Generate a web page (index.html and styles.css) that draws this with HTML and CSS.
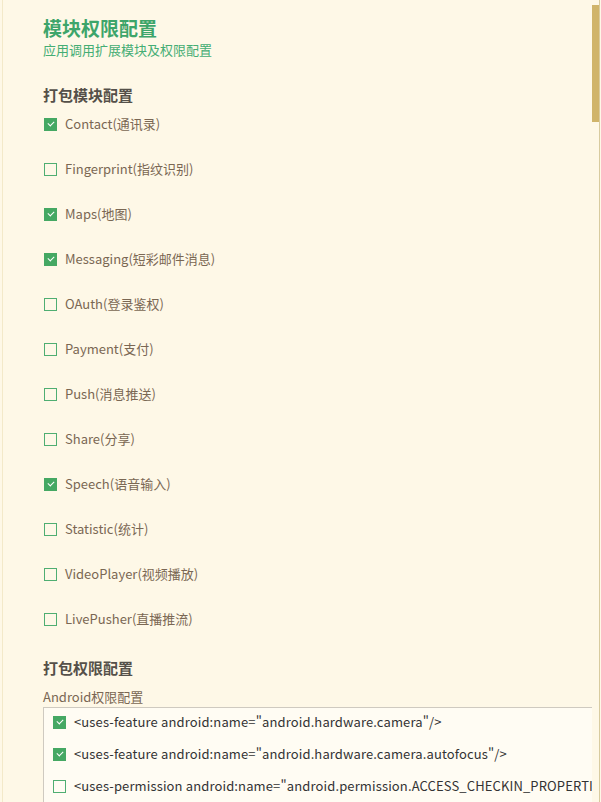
FILE: index.html
```html
<!DOCTYPE html>
<html lang="zh-CN">
<head>
<meta charset="utf-8">
<title>模块权限配置</title>
<link rel="stylesheet" href="styles.css">
</head>
<body>
<div class="frame">
  <div class="edge-left"></div>
  <main class="main">
    <header class="header">
      <h1 class="title">模块权限配置</h1>
      <p class="subtitle">应用调用扩展模块及权限配置</p>
    </header>

    <h2 class="section-title">打包模块配置</h2>
    <ul class="module-list">
      <li class="row"><span class="cb checked"></span><span class="label">Contact(通讯录)</span></li>
      <li class="row"><span class="cb"></span><span class="label">Fingerprint(指纹识别)</span></li>
      <li class="row"><span class="cb checked"></span><span class="label">Maps(地图)</span></li>
      <li class="row"><span class="cb checked"></span><span class="label">Messaging(短彩邮件消息)</span></li>
      <li class="row"><span class="cb"></span><span class="label">OAuth(登录鉴权)</span></li>
      <li class="row"><span class="cb"></span><span class="label">Payment(支付)</span></li>
      <li class="row"><span class="cb"></span><span class="label">Push(消息推送)</span></li>
      <li class="row"><span class="cb"></span><span class="label">Share(分享)</span></li>
      <li class="row"><span class="cb checked"></span><span class="label">Speech(语音输入)</span></li>
      <li class="row"><span class="cb"></span><span class="label">Statistic(统计)</span></li>
      <li class="row"><span class="cb"></span><span class="label">VideoPlayer(视频播放)</span></li>
      <li class="row"><span class="cb"></span><span class="label">LivePusher(直播推流)</span></li>
    </ul>

    <h2 class="section-title perm-title">打包权限配置</h2>
    <div class="sub-title">Android权限配置</div>
    <ul class="perm-box">
      <li class="perm-row"><span class="cb checked"></span><span class="code">&lt;uses-feature android:name="android.hardware.camera"/&gt;</span></li>
      <li class="perm-row"><span class="cb checked"></span><span class="code">&lt;uses-feature android:name="android.hardware.camera.autofocus"/&gt;</span></li>
      <li class="perm-row"><span class="cb"></span><span class="code">&lt;uses-permission android:name="android.permission.ACCESS_CHECKIN_PROPERTIES"/&gt;</span></li>
    </ul>
  </main>
  <div class="track"><div class="thumb"></div></div>
  <div class="edge-right"></div>
  <div class="outer"></div>
</div>
</body>
</html>
```

FILE: styles.css
```css
html, body {
  margin: 0;
  padding: 0;
  height: 100%;
  overflow: hidden;
}
body {
  background: #fef8e7;
  font-family: "Noto Sans CJK SC", "Noto Sans", sans-serif;
}
.frame {
  display: flex;
  height: 802px;
  background: #fef8e7;
}
.edge-left {
  width: 2px;
  flex: none;
  border-right: 1px solid #f3e9c9;
}
.main {
  flex: 1;
  min-width: 0;
  overflow: hidden;
  padding-left: 40px;
}
.track {
  width: 7px;
  flex: none;
  padding-top: 5px;
}
.thumb {
  height: 117px;
  background: #d0b46a;
}
.edge-right {
  width: 1px;
  flex: none;
  background: #d8cb9f;
}
.outer {
  width: 1px;
  flex: none;
  background: #fef8e7;
}
.header {
  padding-top: 16px;
}
.title {
  margin: 0;
  font-size: 19px;
  line-height: 24px;
  font-weight: 700;
  color: #3da56a;
}
.subtitle {
  margin: 1px 0 0;
  font-size: 13px;
  line-height: 18px;
  color: #45ad74;
}
.section-title {
  margin: 26px 0 0;
  font-size: 15px;
  line-height: 20px;
  font-weight: 700;
  color: #555049;
}
.module-list {
  list-style: none;
  margin: 9px 0 0;
  padding: 0 0 0 1px;
  display: flex;
  flex-direction: column;
  gap: 25px;
}
.row {
  display: flex;
  align-items: center;
  height: 20px;
}
.cb {
  width: 11px;
  height: 11px;
  border: 1px solid #4fae72;
  background: transparent;
  flex: none;
  position: relative;
  margin-right: 8px;
}
.cb.checked {
  background: #45a863;
  border-color: #45a863;
}
.cb.checked::after {
  content: "";
  position: absolute;
  left: 3px;
  top: 2px;
  width: 5px;
  height: 3px;
  border-left: 1.5px solid #ffffff;
  border-bottom: 1.5px solid #ffffff;
  transform: rotate(-45deg);
}
.label {
  font-size: 13px;
  line-height: 20px;
  color: #7a6753;
}
.perm-title {
  margin-top: 29px;
}
.sub-title {
  margin-top: 9px;
  font-size: 13px;
  line-height: 20px;
  color: #7a6753;
}
.perm-box {
  list-style: none;
  margin: 0;
  padding: 4px 0 20px 9px;
  border-top: 1px solid #cfcac0;
  border-left: 1px solid #cfcac0;
  background: #fffcf3;
  display: flex;
  flex-direction: column;
  gap: 12px;
  white-space: nowrap;
}
.perm-row {
  display: flex;
  align-items: center;
  height: 20px;
}
.code {
  font-size: 13px;
  line-height: 20px;
  letter-spacing: 0.13px;
  color: #333333;
}
```
